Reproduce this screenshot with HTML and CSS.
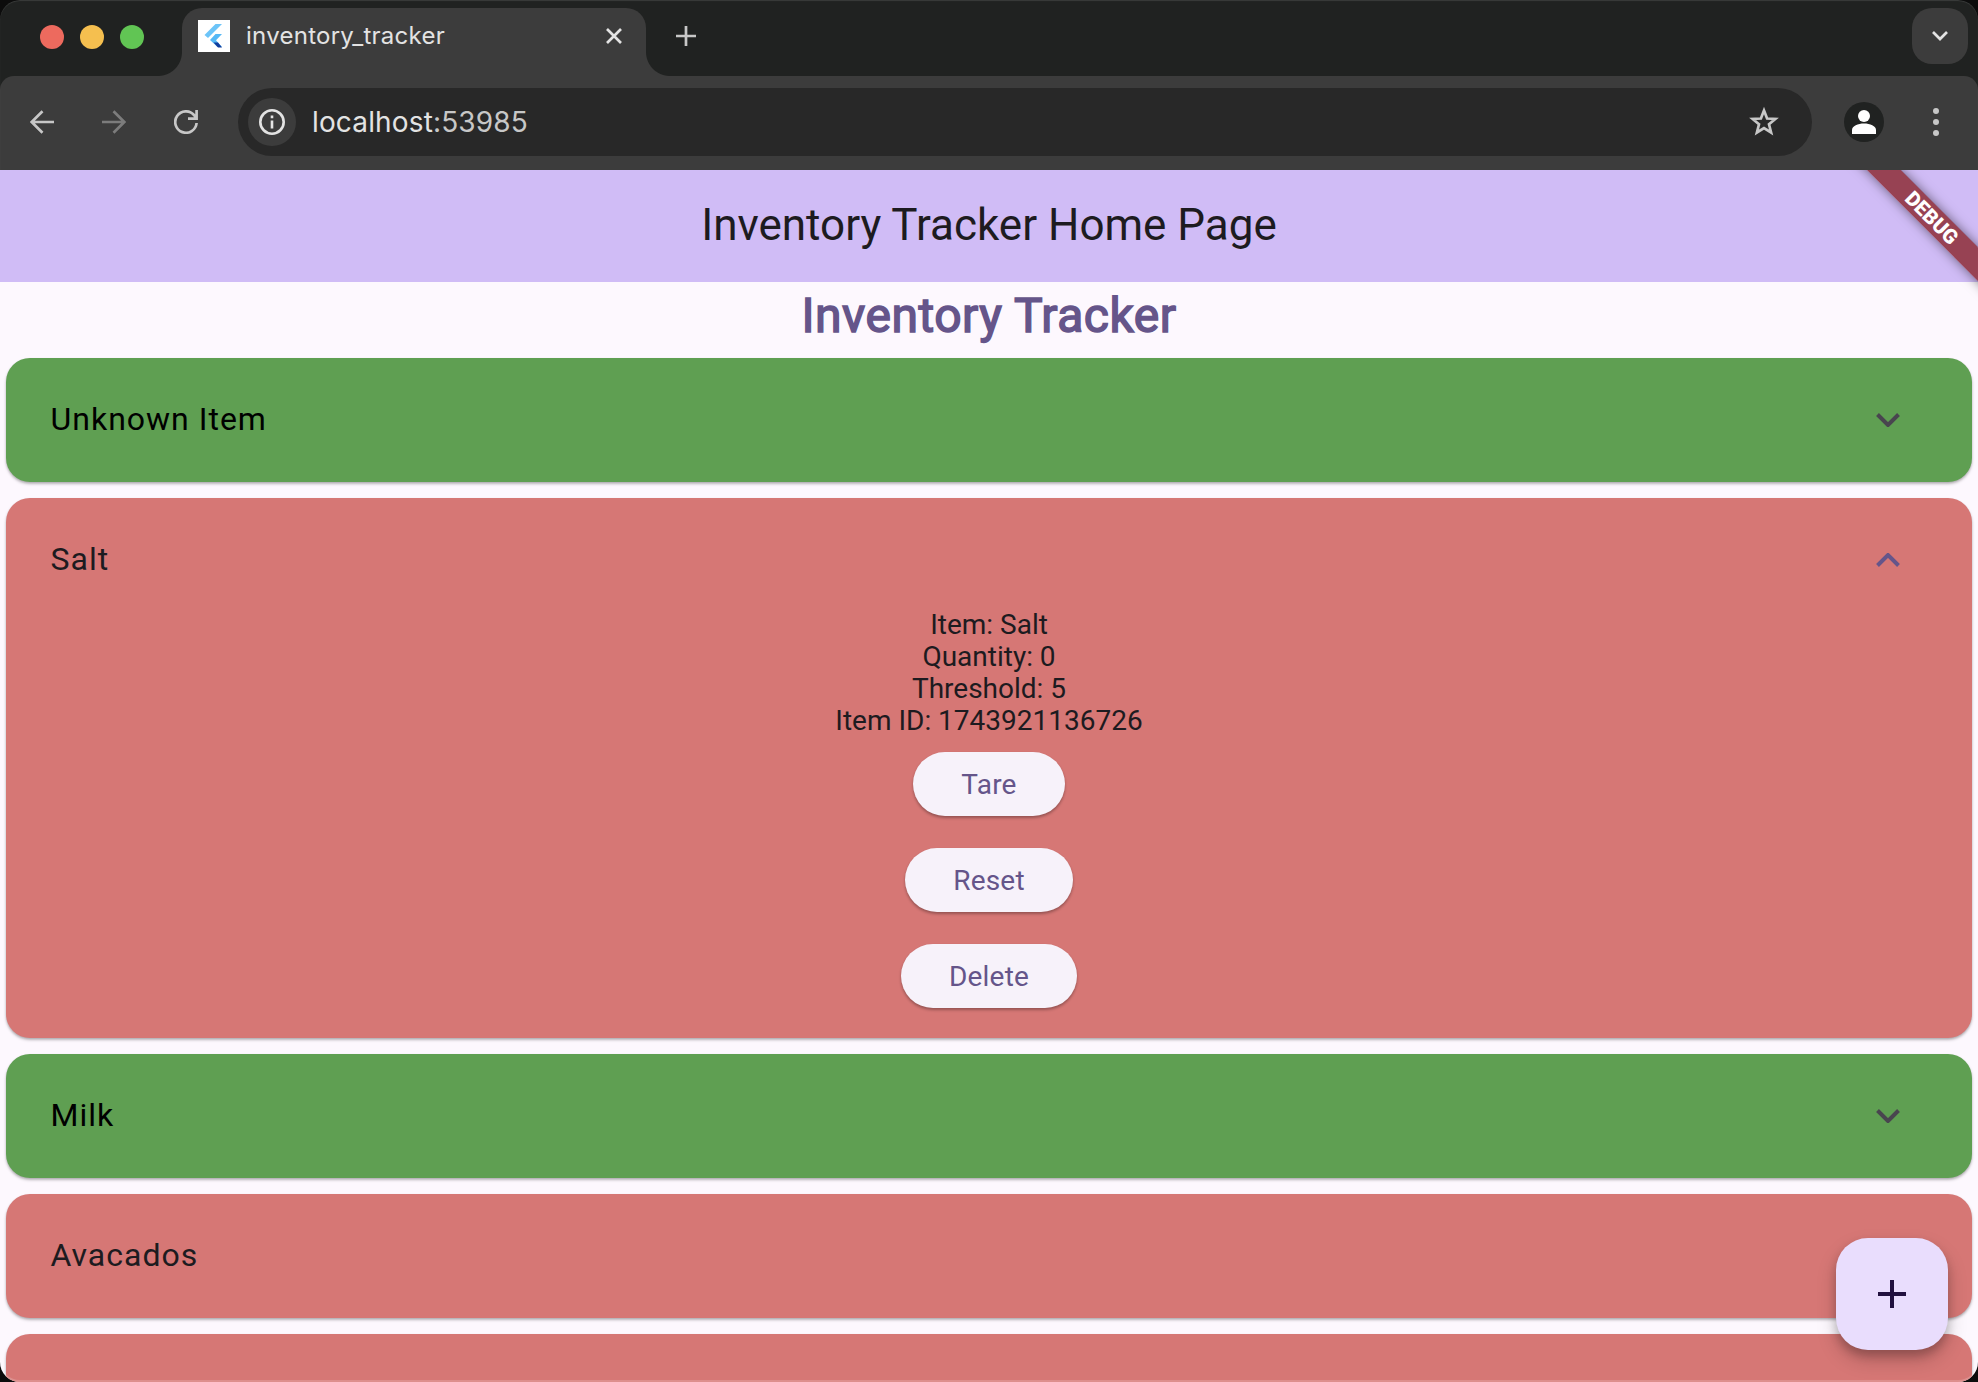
FILE: index.html
```html
<!DOCTYPE html>
<html lang="en">
<head>
<meta charset="utf-8">
<title>inventory_tracker</title>
<link rel="stylesheet" href="styles.css">
</head>
<body>
<div class="window">
  <div class="tabstrip">
    <div class="lights"><i class="light red"></i><i class="light amber"></i><i class="light green"></i></div>
    <div class="tab">
      <svg class="favicon" viewBox="0 0 32 32"><rect width="32" height="32" fill="#fff"/><path d="M17.500 4H24L10 18l-3.500-3z" fill="#6cc4f8"/><path d="M17.500 14H24l-6 6.200 6 6.800h-4.500L12 20z" fill="#55b8f5"/><path d="M15.500 22.500H20L24 27.500h-4z" fill="#123c9c"/></svg>
      <span class="tab-title">inventory_tracker</span>
      <svg class="tab-close" viewBox="0 0 16 16"><path d="M1 1l14 14M15 1L1 15"/></svg>
    </div>
    <svg class="new-tab" viewBox="0 0 20 20"><path d="M10 0v20M0 10h20"/></svg>
    <div class="tab-search"><svg viewBox="0 0 16 10"><path d="M1 1l7 7 7-7"/></svg></div>
  </div>
  <div class="toolbar">
    <svg class="nav" viewBox="0 0 24 24"><path d="M24 12H2M12.500 1.200L1.700 12l10.800 10.800"/></svg>
    <svg class="nav dim" viewBox="0 0 24 24"><path d="M0 12h22M11.500 1.200L22.300 12 11.500 22.800"/></svg>
    <svg class="nav" viewBox="0 0 24 24"><path d="M22.600 13A10.700 10.700 0 1 1 20 5l2.500 3.500M22.600 0v8.700H14"/></svg>
    <div class="omnibox">
      <span class="info"><svg viewBox="0 0 26 26"><circle cx="13" cy="13" r="11.700"/><path d="M13 11.500v8M13 6.500v2.700"/></svg></span>
      <span class="url">localhost<span class="port">:53985</span></span>
      <svg class="star" viewBox="0 0 32 32"><path d="M16 4.500l3.100 8 8.300.500-6.400 5.300 2.100 8.200-7.100-4.500-7.100 4.500 2.100-8.200L4.600 13l8.300-.500z"/></svg>
    </div>
    <svg class="avatar" viewBox="0 0 40 40"><circle cx="20" cy="20" r="20" fill="#202221"/><circle cx="20" cy="14" r="6" fill="#fff"/><path d="M8 32v-4c0-4 6-6.500 12-6.500S32 24 32 28v4z" fill="#fff"/></svg>
    <svg class="menu" viewBox="0 0 6 28"><circle cx="3" cy="3" r="3"/><circle cx="3" cy="14" r="3"/><circle cx="3" cy="25" r="3"/></svg>
  </div>
  <main class="app">
    <header class="appbar">Inventory Tracker Home Page</header>
    <h1 class="heading">Inventory Tracker</h1>
    <section class="list">
      <article class="card ok">
        <div class="row"><span>Unknown Item</span><svg class="chev" viewBox="0 0 24 14"><path d="M1.500 1.500L12 12 22.500 1.500"/></svg></div>
      </article>
      <article class="card low open">
        <div class="row"><span>Salt</span><svg class="chev" viewBox="0 0 24 14"><path d="M1.500 12.500L12 2l10.500 10.500"/></svg></div>
        <div class="details">
          <div>Item: Salt</div><div>Quantity: 0</div><div>Threshold: 5</div><div>Item ID: 1743921136726</div>
        </div>
        <div class="actions"><button>Tare</button><button>Reset</button><button>Delete</button></div>
      </article>
      <article class="card ok">
        <div class="row"><span>Milk</span><svg class="chev" viewBox="0 0 24 14"><path d="M1.500 1.500L12 12 22.500 1.500"/></svg></div>
      </article>
      <article class="card low"><div class="row"><span>Avacados</span></div></article>
      <article class="card low"><div class="row"></div></article>
    </section>
    <div class="banner">DEBUG</div>
    <button class="fab" aria-label="Add"><svg viewBox="0 0 28 28"><path d="M14 0v28M0 14h28"/></svg></button>
  </main>
</div>
</body>
</html>
```
FILE: styles.css
```css
* { box-sizing: border-box; }
body { margin: 0; background: #0c0c0c; }
svg { display: block; flex: none; fill: none; }
button { border: 0; font: inherit; }
.window { position: relative; display: flex; flex-direction: column; width: 1978px; height: 1382px; overflow: hidden; border-radius: 20px; background: #202221; }
/* thin light rim round the window frame */
.window::after { content: ""; position: absolute; inset: 0; border-radius: 20px; box-shadow: inset 0 -2px 0 rgba(255,255,255,.18), inset 0 1px 1px rgba(255,255,255,.12); pointer-events: none; }
.tabstrip { display: flex; flex: none; height: 76px; padding-right: 10px; font-family: Inter, sans-serif; }
.lights { display: flex; gap: 16px; width: 182px; padding: 25px 0 0 40px; }
.light { width: 24px; height: 24px; border-radius: 50%; }
.red { background: #ed6a5e; }
.amber { background: #f5bf4f; }
.green { background: #61c554; }
.tab { position: relative; display: flex; align-items: center; width: 464px; height: 68px; margin-top: 8px; padding: 0 24px 12px 16px; border-radius: 20px 20px 0 0; background: #3c3c3c; }
.tab::before, .tab::after { content: ""; position: absolute; bottom: 0; width: 24px; height: 24px; }
.tab::before { left: -24px; background: radial-gradient(circle at 0 0, transparent 23.500px, #3c3c3c 24.500px); }
.tab::after { right: -24px; background: radial-gradient(circle at 100% 0, transparent 23.500px, #3c3c3c 24.500px); }
.favicon { width: 32px; height: 32px; }
.tab-title { flex: 1; margin-left: 16px; padding-bottom: 2px; font-size: 24px; letter-spacing: 0.260px; color: #e3e3e3; }
.tab-close { width: 16px; height: 16px; stroke: #e3e3e3; stroke-width: 2.700; }
.new-tab { width: 20px; height: 20px; margin: 26px 0 0 30px; stroke: #c7c7c7; stroke-width: 2.700; }
.tab-search { display: flex; align-items: center; justify-content: center; width: 56px; height: 56px; margin: 8px 0 0 auto; border-radius: 20px; background: #3c3c3c; }
.tab-search svg { width: 16px; height: 10px; stroke: #e3e3e3; stroke-width: 2.700; }
.toolbar { display: flex; flex: none; align-items: center; height: 94px; padding: 0 39px 2px 30px; border-radius: 14px 14px 0 0; background: #3c3c3c; }
.nav { width: 24px; height: 24px; margin-right: 48px; stroke: #c7c7c7; stroke-width: 2.700; }
.nav.dim { stroke: #7c7c7c; }
.nav:nth-child(3) { margin-right: 40px; }
.omnibox { display: flex; align-items: center; width: 1574px; height: 68px; padding: 0 32px 0 10px; border-radius: 34px; background: #282828; }
.info { display: grid; place-items: center; width: 48px; height: 48px; border-radius: 50%; background: #3c3c3c; }
.info svg { width: 26px; height: 26px; stroke: #e3e3e3; stroke-width: 2.600; }
.url { flex: 1; margin-left: 16px; font: 28px Inter, sans-serif; letter-spacing: .150px; color: #e3e3e3; }
.port { color: #c7c7c7; }
.star { width: 32px; height: 32px; stroke: #c7c7c7; stroke-width: 2.700; }
.avatar { width: 40px; height: 40px; margin-left: 32px; }
.menu { width: 6px; height: 28px; margin-left: auto; fill: #c7c7c7; }
.app { position: relative; flex: 1; overflow: hidden; background: #fdf8fe; font-family: Roboto, sans-serif; color: #1d1b20; }
.appbar { height: 112px; background: #d0bcf6; font-size: 44px; line-height: 111px; text-align: center; }
.heading { height: 76px; margin: 0; font-size: 48px; font-weight: 400; line-height: 67px; letter-spacing: .500px; text-align: center; color: #65558a; -webkit-text-stroke: 1.500px #65558a; }
.list { display: flex; flex-direction: column; gap: 16px; padding: 0 6px; }
.card { flex: none; border-radius: 24px; box-shadow: 0 2px 3px rgba(0,0,0,.26), 0 1px 2px rgba(0,0,0,.08); }
.ok { background: #5f9f52; color: #000; }
.low { background: #d67775; }
.open { height: 540px; }
.row { display: flex; align-items: center; justify-content: space-between; height: 124px; padding: 0 72px 0 44.500px; font-size: 32px; letter-spacing: 1px; }
.row span { padding-bottom: 2px; }
.chev { width: 24px; height: 14px; stroke: #49454f; stroke-width: 4; }
.open .chev { stroke: #65558a; }
.details { margin-top: -13px; font-size: 28px; line-height: 32px; text-align: center; }
.actions { display: flex; flex-direction: column; align-items: center; gap: 32px; margin-top: 15px; }
.actions button { height: 64px; padding: 0 48px; border-radius: 32px; background: #f7f2fa; color: #65558a; font-size: 28px; letter-spacing: .200px; box-shadow: 0 2px 3px rgba(0,0,0,.3); }
.banner { position: absolute; top: 54px; right: -120px; width: 240px; height: 24px; padding-left: 5px; transform: rotate(45deg); transform-origin: 120px -56px; background: rgba(127,14,14,.7); box-shadow: 0 0 12px rgba(0,0,0,.5); color: #fff; font-size: 20.400px; font-weight: 900; line-height: 24px; text-align: center; }
.fab { position: absolute; right: 30px; bottom: 32px; display: grid; place-items: center; width: 112px; height: 112px; padding: 0; border-radius: 32px; background: #e9ddfd; box-shadow: 0 6px 10px rgba(0,0,0,.2), 0 10px 20px rgba(0,0,0,.18); }
.fab svg { width: 28px; height: 28px; stroke: #21103f; stroke-width: 4; }
```
